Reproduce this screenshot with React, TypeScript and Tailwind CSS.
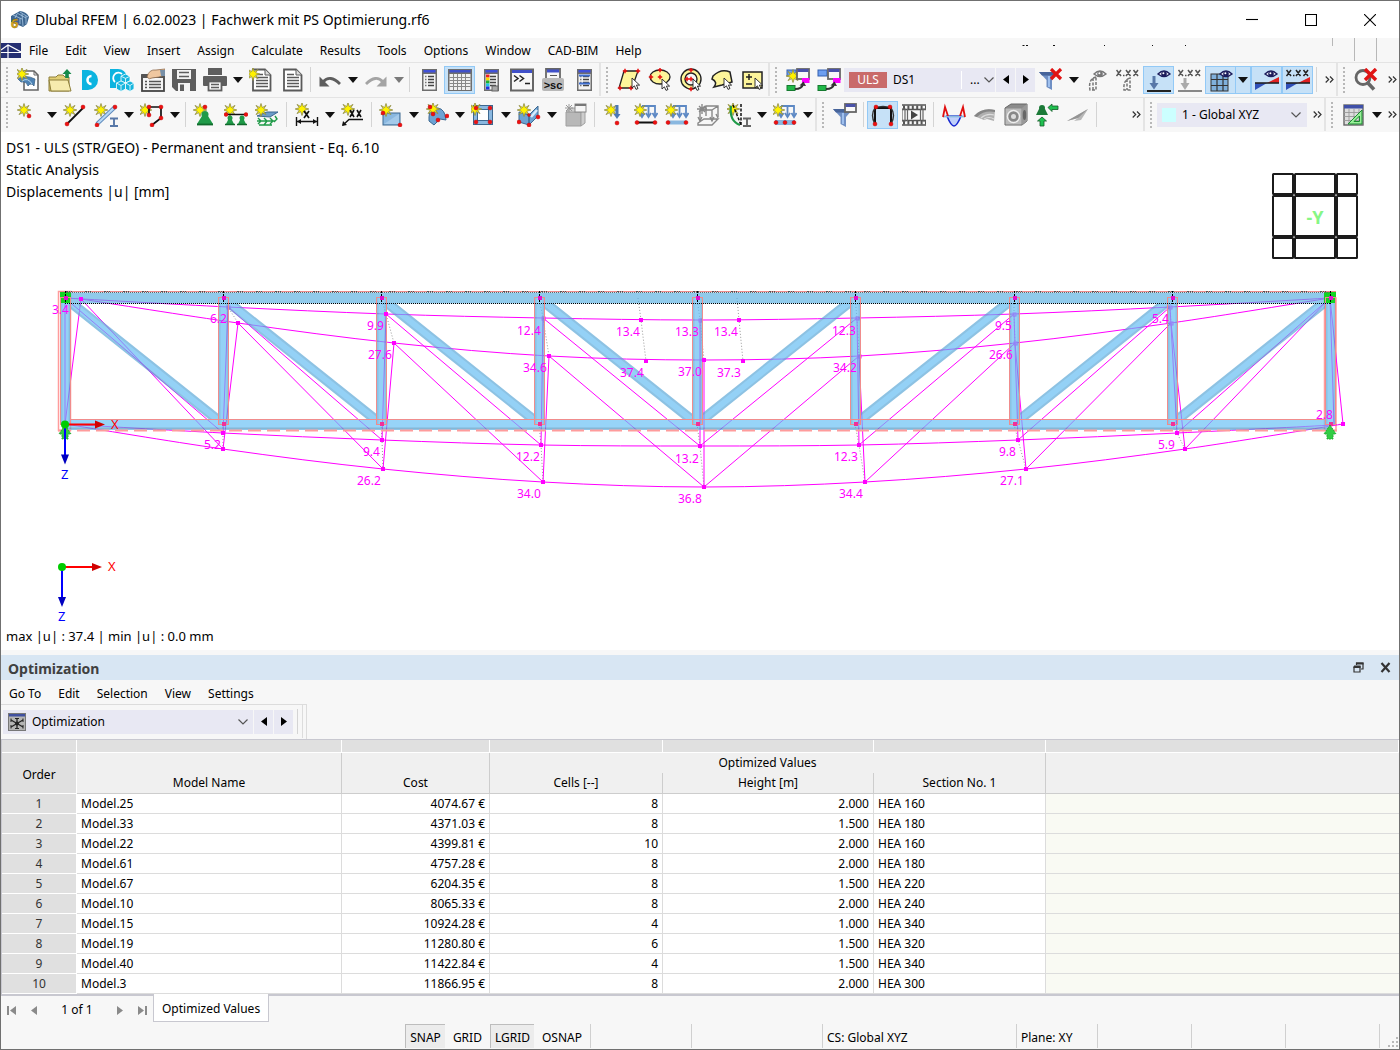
import React from "react";

type Kids = { children?: React.ReactNode };

/* ---------- small drawing helpers ---------- */

const Star = ({ x = 6, y = 6 }: { x?: number; y?: number }) => (
  <g transform={`translate(${x} ${y})`}>
    <path
      d="M0-6.5 1.3-2.4 5-4.6 2.7-1.2 6.8 0 2.7 1.2 5 4.6 1.3 2.6 0 6.5-1.3 2.6-5 4.6-2.7 1.2-6.8 0-2.7-1.2-5-4.6-1.3-2.4Z"
      fill="#fff200"
      stroke="#8d8a4a"
      strokeWidth=".8"
    />
  </g>
);
const Dot = ({ x, y, r = 2 }: { x: number; y: number; r?: number }) => (
  <circle cx={x} cy={y} r={r} fill="#f01010" stroke="#b00000" strokeWidth=".4" />
);
const Cursor = ({ x = 14, y = 11 }: { x?: number; y?: number }) => (
  <path transform={`translate(${x} ${y})`} d="M0 0V10L2.4 7.8 4 11.4 6 10.5 4.4 7.1H7.6Z" fill="#fff" stroke="#222" strokeWidth=".9" />
);
const Cross = ({ x, y }: { x: number; y: number }) => (
  <path d={`M${x - 2.2} ${y}h4.4M${x} ${y - 2.2}v4.4`} stroke="#e81010" strokeWidth="1.5" />
);
const Eye = ({ x = 14, y = 6, c = "#1d1d5c" }: { x?: number; y?: number; c?: string }) => (
  <g transform={`translate(${x} ${y})`}>
    <path d="M-6 0Q0-6 6 0Q0 5-6 0Z" fill="#f4f4fa" stroke={c} strokeWidth="1.4" />
    <circle r="2.8" fill={c} />
    <circle r="1" cx="-.6" cy="-.8" fill="#fff" />
  </g>
);
const WindowBox = ({ x, y, w, h }: { x: number; y: number; w: number; h: number }) => (
  <g>
    <rect x={x} y={y} width={w} height={h} fill="#f8f8f8" stroke="#666" strokeWidth="1.8" />
    <rect x={x + 0.6} y={y} width={w - 1.2} height="3" fill="#4a52a8" />
  </g>
);
const DownArrows = () => (
  <g stroke="#5c88c4" strokeWidth="1.8" fill="none">
    <path d="M8 3H21V13M8 3V13M14.500 3V12" />
    <path d="M5.500 10 8 14 10.500 10M12 10 14.500 14 17 10M18.500 10 21 14 23.500 10" />
  </g>
);
const Values = ({ c }: { c: string }) => (
  <g stroke={c} strokeWidth="1.5" fill="none">
    <path d="M.500 2 5 8M5 2 .500 8M10 2 14.500 8M14.500 2 10 8M17.500 2 22 8M22 2 17.500 8" />
    <path d="M7 7.500h1.500" />
  </g>
);
const Docs = ({ star = false }: { star?: boolean }) => (
  <>
    <path d="M4 1.500H16L21.500 7V22.500H4Z" fill="#fff" stroke="#5a5a5a" strokeWidth="1.800" />
    <path d="M16 1.500V7H21.500" fill="#ddd" stroke="#5a5a5a" />
    <path d="M7 9.500h12M7 12.500h12M7 15.500h12M7 18.500h12M7 6.500h7" stroke="#5a5a5a" strokeWidth="1.500" />
    {star && <Star x={4} y={6} />}
  </>
);
const ListWindow = ({ bars = false, blue = false }: { bars?: boolean; blue?: boolean }) => (
  <>
    <rect x="5" y="1" width="15" height="22" fill="#6e6e6e" />
    <rect x="6.500" y="6" width="12" height="15.500" fill="#f4f4f4" />
    <rect x="6.500" y="2" width="12" height="2.500" fill="#4050d8" />
    <path d="M11 8.500h6M11 11.500h6M11 14.500h6M11 17.500h6" stroke="#444" strokeWidth="1.300" />
    <path d="M8 8.500h1.500M8 11.500h1.500M8 14.500h1.500M8 17.500h1.500" stroke="#777" strokeWidth="1.300" />
    {bars && (
      <g>
        <rect x="7" y="6.500" width="3.500" height="3" fill="#f02020" />
        <rect x="7" y="9.500" width="3.500" height="3" fill="#ffd800" />
        <rect x="7" y="12.500" width="3.500" height="3" fill="#20b030" />
        <rect x="7" y="15.500" width="3.500" height="3" fill="#20c8e8" />
        <rect x="7" y="18.500" width="3.500" height="3" fill="#2030e0" />
        <rect x="13" y="18" width="6" height="5" fill="#aaa" stroke="#666" />
      </g>
    )}
    {blue && <path d="M7 7.500h11M7 15.500h11" stroke="#3f6fd0" strokeWidth="1.800" />}
  </>
);
const Flow = ({ star = false }: { star?: boolean }) => (
  <>
    <rect x="1" y="2" width="9" height="6" fill="#6d9ff0" stroke="#3560b0" />
    {star && <Star x={7} y={8} />}
    <WindowBox x={11} y={1} w={12} h={10} />
    <rect x="16" y="10" width="7.500" height="5" fill="#f0f" />
    <rect x="1" y="17.500" width="8" height="5" fill="#20b848" stroke="#167a30" />
    <path d="M9 21Q16 21 17 16" fill="none" stroke="#333" strokeWidth="2" />
    <path d="M13.500 17.500 17.500 13.500 20 18Z" fill="#333" />
  </>
);
const Funnel = ({ y = 5 }: { y?: number }) => (
  <g transform={`translate(0 ${y})`}>
    <path d="M0 0H20L13 8V18L7.500 15V8Z" fill="#6f8fc4" />
    <path d="M0 0H20L17 3.500H3Z" fill="#47649a" />
    <path d="M10 4V15" stroke="#9fc0ee" strokeWidth="2" />
  </g>
);

/* ---------- toolbar drawings ---------- */

const art: Record<string, React.ReactNode> = {
  "New model": (
    <>
      <path d="M7 3H17L21 7V22H7Z" fill="#fff" stroke="#666" strokeWidth="1.600" />
      <path d="M17 3V7H21" fill="none" stroke="#666" />
      <path d="M1 11Q8 6 18 11L17 18Q14 14 11 18Q9 13 4 14Z" fill="#4d82b4" stroke="#335b80" strokeWidth=".7" />
      <path d="M5 13Q11 9 15 16" fill="none" stroke="#b4d6f0" />
      <Star x={5} y={6} />
    </>
  ),
  Open: (
    <>
      <path d="M1 23V9H8L10 7H15L17 9H21V23Z" fill="#e2cf76" stroke="#8d7e3a" />
      <path d="M1 12H20L23 23H3Z" fill="#f6ebae" stroke="#8d7e3a" />
      <path d="M19 1 23.500 6H20.800V10H17.200V6H14.500Z" fill="#168a4a" />
    </>
  ),
  "Dlubal Center": (
    <>
      <path d="M3 2H9A10 10 0 0 1 9 22H3Z" fill="#0cb4e0" />
      <path d="M12.500 8A4 4 0 1 0 12.500 16" fill="none" stroke="#fff" strokeWidth="2.600" />
    </>
  ),
  "Block manager": (
    <>
      <path d="M0 1H8A10 10 0 0 1 17 8L9 20H0Z" fill="#0cb4e0" />
      <path d="M5 14A5 5 0 0 1 12 6" fill="none" stroke="#fff" strokeWidth="1.800" />
      <g fill="#16b6de" stroke="#fff" strokeWidth=".8">
        <path d="M15.500 6 20 8.200V13L15.500 15 11 13V8.200Z" />
        <path d="M11 13 15.500 15V21L11 23.500 6.500 21V15Z" />
        <path d="M20 13 24 15V21L20 23.500 15.500 21V15Z" />
        <path d="M11 8.200 15.500 10.400 20 8.200M15.500 10.400V15M6.500 15 11 17.500 15.500 15 20 17.500 24 15M11 17.500V23.500M20 17.500V23.500" />
      </g>
    </>
  ),
  "Project navigator": (
    <>
      <rect x="1" y="7" width="22" height="16" fill="#f5f5f5" stroke="#444" strokeWidth="1.800" />
      <rect x="1" y="7" width="22" height="3" fill="#555" />
      <path d="M4 13.500h2M4 16.500h2M4 19.500h2M8 13.500h12M8 16.500h12M8 19.500h12" stroke="#555" strokeWidth="1.300" />
      <path d="M6 9Q8 1 15 2L24 1V7L18 9 11 10Q8 12 6 9Z" fill="#efc7a0" stroke="#8e6b4d" strokeWidth=".8" />
      <path d="M19 2H24V8H20Z" fill="#7890a8" />
    </>
  ),
  Save: (
    <>
      <path d="M0 1H24V23H4L0 19Z" fill="#5e5e5e" />
      <rect x="5" y="2" width="14" height="9" fill="#f4f4f4" />
      <path d="M7 4.500h10M7 8.500h10" stroke="#5e5e5e" strokeWidth="1.400" />
      <rect x="6" y="15" width="12" height="8" fill="#f4f4f4" />
      <rect x="8" y="16.500" width="4" height="6.500" fill="#5e5e5e" />
    </>
  ),
  Print: (
    <>
      <rect x="5" y="0" width="14" height="7" fill="#5e5e5e" />
      <rect x="0" y="8" width="24" height="10" rx="1" fill="#5e5e5e" />
      <rect x="5.500" y="13.500" width="13" height="9" fill="#f7f7f7" stroke="#5e5e5e" strokeWidth="1.800" />
      <path d="M8 16.500h8M8 19.500h8" stroke="#5e5e5e" strokeWidth="1.600" />
    </>
  ),
  "New report": <Docs star />,
  Report: <Docs />,
  Undo: (
    <>
      <path d="M5 14Q12 6 22 16" fill="none" stroke="#5e5e5e" strokeWidth="2.800" />
      <path d="M1.500 8.500V18.500H11.500Z" fill="#5e5e5e" />
    </>
  ),
  Redo: (
    <>
      <path d="M19 14Q12 6 2 16" fill="none" stroke="#a4a4a4" strokeWidth="2.800" />
      <path d="M22.500 8.500V18.500H12.500Z" fill="#a4a4a4" />
    </>
  ),
  Navigator: <ListWindow />,
  Tables: (
    <>
      <rect x="0" y="1" width="24" height="22" fill="#6e6e6e" />
      <rect x="1.500" y="2" width="21" height="2.500" fill="#4050c8" />
      <rect x="1.500" y="6" width="21" height="16" fill="#f0f0f0" />
      <path d="M1.500 9.500h21M1.500 12.500h21M1.500 15.500h21M1.500 18.500h21M5.500 6v16M9.500 6v16M13.500 6v16M17.500 6v16" stroke="#888" />
    </>
  ),
  "Control panel": <ListWindow bars />,
  Console: (
    <>
      <rect x="1" y="1.500" width="22" height="21" fill="#f6f6f6" stroke="#666" strokeWidth="2" />
      <rect x="2" y="2" width="20" height="3" fill="#4050c8" />
      <path d="M4 7.500 8 10.500 4 13.500M9.500 7.500 13.500 10.500 9.500 13.500M15 15.500H20" fill="none" stroke="#222" strokeWidth="1.500" />
    </>
  ),
  Script: (
    <>
      <path d="M5 1H19V12H5Z" fill="#f6f6f6" stroke="#666" strokeWidth="1.800" />
      <rect x="6" y="1.500" width="12" height="3" fill="#4050c8" />
      <path d="M9 7.500h7" stroke="#555" />
      <rect x="1" y="10" width="22" height="13" rx="2" fill="#b8b8b8" />
      <text x="12" y="21" textAnchor="middle" fontSize="11" fontWeight="700" fill="#111" fontFamily="Liberation Sans, sans-serif">&gt;sc</text>
    </>
  ),
  "Property list": <ListWindow blue />,
  "Select parallelogram": (
    <>
      <path d="M7 3H21L15 20H2Z" fill="#fdf59a" stroke="#222" strokeWidth="1.300" />
      <Cross x={8} y={3} /><Cross x={21} y={3} /><Cross x={3} y={20} /><Cross x={14} y={20} />
      <Cursor x={15} y={10} />
    </>
  ),
  "Select ellipse": (
    <>
      <ellipse cx="12" cy="9" rx="10" ry="7" fill="#fdf59a" stroke="#222" strokeWidth="1.300" />
      <Cross x={12} y={2} /><Cross x={3} y={9} /><Cross x={12} y={9} />
      <Cursor x={14} y={11} />
    </>
  ),
  "Select ring": (
    <>
      <circle cx="12" cy="11" r="10" fill="#fdf59a" stroke="#222" strokeWidth="1.400" />
      <circle cx="12" cy="11" r="6" fill="#f7f7f7" stroke="#222" strokeWidth="1.400" />
      <Cross x={12} y={2} /><Cross x={12} y={11} /><Cross x={8} y={11} /><Cross x={12} y={21} />
      <Cursor x={14} y={11} />
    </>
  ),
  "Select polygon": (
    <>
      <path d="M3 8Q11 0 20 4L22 14 12 17 4 19Q8 14 2 11Z" fill="#fdf59a" stroke="#222" strokeWidth="1.500" />
      <Cursor x={14} y={10} />
    </>
  ),
  "Select by number": (
    <>
      <rect x="2" y="4" width="19" height="16" fill="#fdf59a" stroke="#222" strokeWidth="1.500" />
      <path d="M5 9h6M8 6v6M5 16h6" stroke="#222" strokeWidth="1.500" />
      <Cursor x={14} y={10} />
    </>
  ),
  "New load case": <Flow star />,
  "Load cases": <Flow />,
  "Cancel filter": (
    <>
      <Funnel y={4} />
      <path d="M12 1 22 11M22 1 12 11" stroke="#e01414" strokeWidth="3.200" />
    </>
  ),
  "Show loads": (
    <>
      <path d="M11 9Q3 11 5 22H11ZM8 10V22" fill="none" stroke="#777" strokeWidth="1.500" strokeDasharray="3 1.500" />
      <Eye x={15} y={6} c="#777" />
    </>
  ),
  "Load values": (
    <>
      <Values c="#555" />
      <path d="M14 10Q7 12 8 22H14ZM11 11V22" fill="none" stroke="#777" strokeWidth="1.500" strokeDasharray="3 1.500" />
    </>
  ),
  "Show results": (
    <>
      <path d="M7 8V17" stroke="#5878a8" strokeWidth="3" />
      <path d="M2.500 15H11.500L7 21.500Z" fill="#5878a8" />
      <path d="M0 23h24" stroke="#222" strokeWidth="2" />
      <Eye x={17} y={6} />
    </>
  ),
  "Result values": (
    <>
      <Values c="#555" />
      <path d="M7 10V17" stroke="#aaa" strokeWidth="3" />
      <path d="M2.500 15H11.500L7 22Z" fill="#aaa" />
      <path d="M0 23h24" stroke="#888" strokeWidth="2" />
    </>
  ),
  "Result grid": (
    <>
      <rect x="2" y="6" width="17" height="17" fill="#7fb0dc" stroke="#333" />
      <path d="M2 11.500h17M2 17.500h17M8 6v17M14 6v17" stroke="#333" strokeWidth="1.200" />
      <Eye x={17} y={6} />
    </>
  ),
  "Result diagrams": (
    <>
      <path d="M0 15H12L0 22Z" fill="#2f4fb8" />
      <path d="M12 15 24 9V15Z" fill="#e02020" />
      <path d="M0 15h24" stroke="#222" strokeWidth="1.600" />
      <Eye x={16} y={6} />
    </>
  ),
  "Diagram values": (
    <>
      <Values c="#222" />
      <path d="M0 15H12L0 22Z" fill="#2f4fb8" />
      <path d="M12 15 24 9V15Z" fill="#e02020" />
      <path d="M0 15h24" stroke="#222" strokeWidth="1.600" />
    </>
  ),
  "Clear search": (
    <>
      <circle cx="9" cy="9.500" r="7" fill="none" stroke="#666" strokeWidth="2.800" />
      <path d="M13 14 20 21.500" stroke="#666" strokeWidth="3.600" />
      <path d="M11 1 22 12M22 1 11 12" stroke="#e01414" strokeWidth="3.400" />
    </>
  ),
  "New node": (<><Star x={7} y={7} /><Dot x={12} y={13} /></>),
  "New line": (
    <>
      <Star x={7} y={7} /><path d="M4 21 20 5" stroke="#111" strokeWidth="1.800" />
      <Dot x={4} y={21} /><Dot x={20} y={4} />
    </>
  ),
  "New member": (
    <>
      <Star x={7} y={7} /><path d="M3 21 21 4" stroke="#5c88bc" strokeWidth="4" /><path d="M3 21 21 4" stroke="#b8d8f4" strokeWidth="2.200" />
      <Dot x={3} y={22} /><Dot x={21} y={4} />
      <path d="M16 15.500h8M16 23h8M20 15.500V23" stroke="#5878a8" strokeWidth="1.900" />
    </>
  ),
  "New polyline": (
    <>
      <Star x={5} y={7} /><path d="M9 13V4H21V15L12 22" fill="none" stroke="#111" strokeWidth="1.700" />
      <Dot x={9} y={12} /><Dot x={9} y={4} /><Dot x={21} y={4} /><Dot x={21} y={15} /><Dot x={12} y={22} />
    </>
  ),
  "New nodal support": (
    <>
      <Star x={7} y={7} /><Dot x={12} y={4} />
      <circle cx="12" cy="11.500" r="3.500" fill="#1f9a48" /><path d="M9 13H15L20 21H4Z" fill="#1f9a48" /><path d="M4 21.500h16" stroke="#116a2c" strokeWidth="1.800" />
    </>
  ),
  "New line support": (
    <>
      <Star x={6} y={7} /><path d="M2 11.500H22" stroke="#111" strokeWidth="1.500" /><Dot x={2} y={11.5} /><Dot x={22} y={11.5} />
      <path d="M6 13 10 21H2ZM18 13 22 21H14Z" fill="#1f9a48" /><circle cx="6" cy="15" r="2.500" fill="#1f9a48" /><circle cx="18" cy="15" r="2.500" fill="#1f9a48" /><path d="M1 21.500h10M13 21.500h10" stroke="#116a2c" strokeWidth="1.500" />
    </>
  ),
  "New surface support": (
    <>
      <path d="M2 13 12 9H23L15 14Z" fill="#6b9cc8" stroke="#3d6890" />
      <Star x={6} y={7} />
      <path d="M3 15 6 18 3 21M9 15 12 18 9 22M15 15 18 18 15 21M20 13 22 16 19 19M2 18H20M4 22H17" fill="none" stroke="#1f9a48" strokeWidth="1.400" />
    </>
  ),
  "New dimension": (
    <>
      <Star x={7} y={6} /><path d="M1.500 14V23M22.500 14V23M2 18.500H22" stroke="#111" strokeWidth="1.400" /><path d="M2 18.500 6 16V21ZM22 18.500 18 16V21Z" fill="#111" />
      <path d="M9 8 14 15M14 8 9 15" stroke="#111" strokeWidth="1.700" />
    </>
  ),
  "New annotation": (
    <>
      <Star x={7} y={6} /><path d="M9 7 13 14M13 7 9 14M16 7 20 14M20 7 16 14" stroke="#111" strokeWidth="1.600" /><path d="M22 16.500H8L2 22" fill="none" stroke="#111" strokeWidth="1.400" /><path d="M1 23 2 18 6 22Z" fill="#111" />
    </>
  ),
  "New surface": (
    <>
      <rect x="4" y="10" width="17" height="12" fill="#8ab8e0" stroke="#3d6890" /><path d="M5 21 20 11V21Z" fill="#a4caea" /><Star x={7} y={7} /><Dot x={4} y={10} /><Dot x={21} y={22} />
    </>
  ),
  "New curved surface": (
    <>
      <path d="M4 14Q4 4 13 5Q20 6 21 17L15 16 9 22 4 18Z" fill="#6da3d4" stroke="#3d6890" /><Star x={8} y={6} /><Dot x={5} y={4} /><Dot x={8} y={11} /><Dot x={13} y={17} /><Dot x={22} y={13} />
    </>
  ),
  "New opening": (
    <>
      <rect x="2.500" y="2.500" width="19" height="19" fill="#8ab8e0" stroke="#3d6890" /><rect x="6.500" y="6.500" width="11" height="11" fill="#fff" stroke="#3d6890" /><Star x={4} y={6} /><Dot x={5} y={5} /><Dot x={19} y={5} /><Dot x={5} y={19} /><Dot x={19} y={19} />
    </>
  ),
  "New solid": (
    <>
      <path d="M2 9 12 12V22L2 19ZM12 12 21 3V13L12 22Z" fill="#6da3d4" stroke="#3d6890" /><path d="M14 14 20 7" stroke="#d8ecfc" strokeWidth="2.500" /><Star x={7} y={7} /><Dot x={2} y={19} /><Dot x={12} y={22} /><Dot x={21} y={14} /><Dot x={12} y={12} r={1.5} />
    </>
  ),
  "New set": (
    <>
      <path d="M3 9H18V23H3Z" fill="#b8b8b8" stroke="#a0a0a0" /><path d="M3 9 8 5H23L18 9ZM18 9 22 6V20L18 23Z" fill="#cdcdcd" stroke="#a0a0a0" /><rect x="12" y="1" width="11" height="8" fill="#f6f6f6" stroke="#888" /><path d="M12 2h11" stroke="#777" strokeWidth="2" /><path d="M6 1V9M2 5H10M3 2 9 8M9 2 3 8" stroke="#999" />
    </>
  ),
  "Nodal load": (
    <>
      <Star x={8} y={7} /><path d="M14 2V12" stroke="#4c78b4" strokeWidth="3" /><path d="M10.500 11H17.500L14 16Z" fill="#4c78b4" /><Dot x={14} y={20} />
    </>
  ),
  "Line load": (<><DownArrows /><Star x={6} y={7} /><path d="M3 19.500H21" stroke="#111" strokeWidth="2" /><Dot x={3} y={19.5} /><Dot x={21} y={19.5} /></>),
  "Member load": (<><DownArrows /><Star x={6} y={7} /><path d="M3 19.500H21" stroke="#8ab8e0" strokeWidth="4" /><Dot x={3} y={19.5} /><Dot x={21} y={19.5} /></>),
  "Surface load": (
    <g fill="none" stroke="#888" strokeWidth="1.400">
      <path d="M2 20 8 16H22L16 22H2ZM4 18V7L10 3H22V14M4 7H16V18M16 7 22 3M10 3V13" /><path d="M2 14 4 18 6 14M14 14 16 18 18 14M20 11 22 15" /><path d="M6 1V11M1 6H11M3 3 9 9M9 3 3 9" />
    </g>
  ),
  Imperfection: (
    <>
      <Star x={6} y={6} /><path d="M4 3Q2 18 13 22" fill="none" stroke="#1f9a48" strokeWidth="2.200" /><path d="M14 1V23M6 2 14 22" stroke="#111" strokeWidth="1.500" strokeDasharray="3 1.500" /><path d="M16 15.500h8M16 23h8M20 15.500V23" stroke="#666" strokeWidth="1.900" />
    </>
  ),
  "Free load": (<><DownArrows /><Star x={5} y={7} /><rect x="2" y="17" width="20" height="5" fill="#8ab8e0" /><Dot x={3} y={19.5} /><Dot x={12} y={19.5} /><Dot x={21} y={19.5} /></>),
  "Filter window": (<><Funnel y={6} /><WindowBox x={12} y={1} w={11} h={8} /></>),
  Deformation: (
    <>
      <path d="M4 21V5H20V21" fill="none" stroke="#111" strokeWidth="2" /><path d="M4 21Q-1 12 4 5Q12 2 20 5Q25 12 20 21" fill="none" stroke="#333" strokeWidth="1.400" /><Dot x={5} y={4} /><Dot x={19} y={4} /><Dot x={4} y={21} /><Dot x={20} y={21} />
    </>
  ),
  Animation: (
    <>
      <path d="M0 2H24M0 6.500H24M0 17.500H24M0 22H24" stroke="#555" strokeWidth="1.400" /><path d="M1 4.200H24M1 19.800H24" stroke="#555" strokeWidth="3.400" strokeDasharray="2 2.400" /><path d="M5.500 6V18M18.500 6V18M0 6V18H3V6ZM24 6H21V18H24" fill="none" stroke="#666" strokeWidth="1.200" /><path d="M9 7.500V16.500L16 12Z" fill="#444" />
    </>
  ),
  "Internal forces": (
    <>
      <path d="M5 13Q9 23 12 23T19 13Z" fill="#c0d0fa" stroke="#1828d0" strokeWidth="1.600" /><path d="M1 13.500H23" stroke="#8ab8e0" strokeWidth="1.800" /><path d="M1 14 3 4 6 13M23 14 21 4 18 13" fill="none" stroke="#e01010" strokeWidth="1.800" />
    </>
  ),
  "Surface stress": (
    <>
      <path d="M1 13Q9 4 22 7L21 18 14 16 11 17Z" fill="#b0b0b0" /><path d="M1 13Q9 4 22 7V9Q11 7 4 14Z" fill="#858585" /><path d="M8 15Q14 10 21 12M11 16Q16 13 21 16" fill="none" stroke="#ddd" strokeWidth="1.200" />
    </>
  ),
  "Solid stress": (
    <>
      <path d="M1 5 7 1H23V18L18 22H1Z" fill="#8b8b8b" stroke="#666" /><rect x="1.500" y="5.500" width="16" height="16" fill="#bababa" /><ellipse cx="9.500" cy="13.500" rx="6" ry="6" fill="#888" stroke="#eee" strokeWidth="1.500" /><circle cx="9.500" cy="13.500" r="2.500" fill="#ddd" /><path d="M18 5 23 1V18L18 22Z" fill="#999" /><ellipse cx="20.500" cy="12" rx="1.700" ry="5" fill="#666" />
    </>
  ),
  Reactions: (
    <>
      <circle cx="7" cy="5" r="3" fill="#1c7a38" /><path d="M4 6H10L13 12H1Z" fill="#1c7a38" /><path d="M13 4.500 17 1V3H23V6.500H17V8.500Z" fill="#20c050" stroke="#145a28" strokeWidth=".8" /><path d="M7 14 11.500 18H9V23H5V18H2.500Z" fill="#20c050" stroke="#145a28" strokeWidth=".8" />
    </>
  ),
  "Result section": (<><path d="M1 18 22 6 15 17 8 18 12 15Z" fill="#b8b8b8" /><path d="M1 18 22 6 12 15Z" fill="#949494" /></>),
  "View table": (
    <>
      <rect x="2" y="2" width="19" height="20" fill="#ddd" stroke="#666" strokeWidth="1.400" /><rect x="2" y="2" width="19" height="3.500" fill="#3f50a8" /><path d="M2 9.500h19M2 13.500h19M2 17.500h19M7 6v16M12 6v16M17 6v16" stroke="#999" strokeWidth=".9" /><path d="M6 21H20V7ZM12 18.500H17.500V13Z" fill="#98f098" stroke="#1b8a30" fillRule="evenodd" />
    </>
  ),
};

/* ---------- toolbar pieces ---------- */

const Triangle = ({ light = false }: { light?: boolean }) => (
  <svg className="h-[6px] w-[10px]" viewBox="0 0 10 6" aria-hidden="true">
    <path d="M0 0H10L5 6Z" fill={light ? "#7a7a7a" : "#111"} />
  </svg>
);
const Tool = ({ n, on = false }: { n: string; on?: boolean }) => (
  <button
    type="button"
    title={n}
    aria-label={n}
    className={`flex h-7 w-[31px] shrink-0 items-center justify-center ${on ? "border border-[#92c9f6] bg-[#c6e1f7]" : ""}`}
  >
    <svg className="size-6 shrink-0" viewBox="0 0 24 24" aria-hidden="true">{art[n]}</svg>
  </button>
);
const Drop = ({ label, light = false, on = false }: { label: string; light?: boolean; on?: boolean }) => (
  <button
    type="button"
    aria-label={`${label} options`}
    className={`flex h-7 w-[15px] shrink-0 items-center justify-center ${on ? "border border-l-0 border-[#92c9f6] bg-[#c6e1f7]" : ""}`}
  >
    <Triangle light={light} />
  </button>
);
const Sep = ({ wide = false }: { wide?: boolean }) => (
  <span className={`h-[25px] w-px shrink-0 bg-[#d4d4d4] ${wide ? "mx-1" : "mx-[3px]"}`} />
);
const Grip = () => <span className="mx-[5px] h-[26px] w-0 shrink-0 border-l-2 border-dotted border-[#b8b8b8]" />;
const Group = ({ children, grow = false, last = false }: Kids & { grow?: boolean; last?: boolean }) => (
  <div className={`flex h-full items-center ${grow ? "flex-1" : "shrink-0"} ${last ? "" : "border-r-2 border-[#e4e4e4]"}`}>
    <Grip />
    {children}
  </div>
);
const More = ({ label }: { label: string }) => (
  <button type="button" aria-label={`More ${label}`} className="flex h-6 w-[14px] shrink-0 items-center justify-center">
    <svg className="h-[7px] w-[9px]" viewBox="0 0 9 7" aria-hidden="true">
      <path d="M.7.500 3.700 3.500.7 6.500M5 .500 8 3.500 5 6.500" fill="none" stroke="#333" strokeWidth="1.200" />
    </svg>
  </button>
);
const Chevron = () => (
  <svg className="pointer-events-none h-[6px] w-[10px] shrink-0" viewBox="0 0 10 6" aria-hidden="true">
    <path d="M.500.500 5 5 9.500.500" fill="none" stroke="#555" strokeWidth="1.200" />
  </svg>
);
const Step = ({ dir, label }: { dir: "l" | "r"; label: string }) => (
  <button type="button" aria-label={label} className="ml-px flex h-6 w-[19px] shrink-0 items-center justify-center bg-[#e8e8f3]">
    <svg className="h-[9px] w-[6px]" viewBox="0 0 6 9" aria-hidden="true">
      <path d={dir === "l" ? "M6 0V9L0 4.500Z" : "M0 0V9L6 4.500Z"} fill="#000" />
    </svg>
  </button>
);

/* ---------- structure view ---------- */

const xs = [65, 223, 381, 539, 697, 855, 1014, 1172, 1330];
type P = [number, number];
const topA: P[] = [[65, 298], [228, 307], [386, 314], [543, 318], [700, 320], [857, 318], [1014, 314], [1170, 307], [1330, 298]];
const botA: P[] = [[65, 424], [223, 433], [382, 440], [541, 445], [700, 446], [859, 445], [1018, 440], [1177, 433], [1334, 425]];
const topB: P[] = [[81, 299], [238, 323], [394, 343], [549, 356], [704, 360], [859, 356], [1015, 343], [1171, 323], [1330, 298]];
const botB: P[] = [[65, 424], [223, 449], [383, 469], [543, 482], [704, 487], [865, 482], [1026, 469], [1185, 449], [1343, 424]];
const smooth = (p: P[]) =>
  p.slice(1).reduce((d, q, i) => {
    const a = p[Math.max(i - 1, 0)], b = p[i], c = p[Math.min(i + 2, p.length - 1)];
    return `${d}C${b[0] + (q[0] - a[0]) / 6} ${b[1] + (q[1] - a[1]) / 6} ${q[0] - (c[0] - b[0]) / 6} ${q[1] - (c[1] - b[1]) / 6} ${q[0]} ${q[1]}`;
  }, `M${p[0][0]} ${p[0][1]}`);
const webs = (t: P[], b: P[]) =>
  t.map((p, i) => `M${p}L${b[i]}${i < 4 ? `M${p}L${b[i + 1]}` : ""}${i > 4 ? `M${p}L${b[i - 1]}` : ""}`).join("");
const diagonals = xs.map((x, i) => (i < 4 ? `M${x} 298L${xs[i + 1]} 424` : i > 4 ? `M${x} 298L${xs[i - 1]} 424` : "")).join("");
const marks: P[] = [...botA.slice(1, 8), ...topB.slice(0, 5), ...botB.slice(1), [386, 314], [641, 320], [739, 320], [646, 361], [743, 361]];
const faintMarks: P[] = [topA[1], topA[3], topA[4], topA[5], topA[6], topA[7], topB[5], topB[6], topB[7]];
const labels: [string, number, number][] = [
  ["3.4", 52, 314], ["6.2", 210, 323], ["9.9", 367, 330], ["27.6", 368, 359], ["12.4", 517, 335], ["34.6", 523, 372],
  ["13.4", 616, 336], ["37.4", 620, 377], ["13.3", 675, 336], ["37.0", 678, 376], ["13.4", 714, 336], ["37.3", 717, 377],
  ["12.3", 832, 335], ["34.2", 833, 372], ["9.5", 995, 330], ["26.6", 989, 359], ["5.4", 1152, 323], ["2.8", 1316, 419],
  ["5.2", 204, 449], ["9.4", 363, 456], ["26.2", 357, 485], ["12.2", 516, 461], ["34.0", 517, 498], ["13.2", 675, 463],
  ["36.8", 678, 503], ["12.3", 834, 461], ["34.4", 839, 498], ["9.8", 999, 456], ["27.1", 1000, 485], ["5.9", 1158, 449],
];
const Axes = ({ x, y }: { x: number; y: number }) => (
  <g transform={`translate(${x} ${y})`} fontSize="13">
    <path d="M0 0H32" stroke="#f00" strokeWidth="2" /><path d="M30-4 40 0 30 4Z" fill="#d00000" />
    <path d="M0 0V32" stroke="#00f" strokeWidth="2" /><path d="M-4 30 0 40 4 30Z" fill="#0000c0" />
    <circle r="4" fill="#0c0" />
    <text x="46" y="4" fill="#f00">X</text><text x="-4" y="54" fill="#00f">Z</text>
  </g>
);
const Support = ({ x }: { x: number }) => (
  <path d={`M${x} 425L${x + 6} 434H${x + 3}V439H${x - 3}V434H${x - 6}Z`} fill="#3c4" stroke="#2a3" strokeDasharray="2 1" />
);
const Structure = () => (
  <svg className="col-start-1 row-start-1 block w-full" viewBox="1 132 1398 518" role="img" aria-label="Truss displacements" fontFamily="Noto Sans, sans-serif">
    <path d="M58.500 291.500V430.500H70.500V291.500ZM1324.500 298V430.500H1336V298Z" fill="#fff" stroke="#ff9c9c" strokeWidth="1.500" />
    <g fill="none" stroke="#999" strokeDasharray="1 2">
      {xs.map((x, i) => (
        <path key={x} d={`M${x} 298L${topA[i]}L${topB[i]}M${x} 424L${botA[i]}L${botB[i]}`} />
      ))}
      <path d="M638 298 641 320 646 361M737 298 739 320 743 361" />
    </g>
    <g fill="none" stroke="#f0f" strokeWidth="1">
      <path d={smooth(topA)} /><path d={smooth(botA)} /><path d={smooth(topB)} /><path d={smooth(botB)} />
      <path d={webs(topA, botA)} /><path d={webs(topB, botB)} />
      {faintMarks.map(([x, y]) => <rect key={`${x}-${y}`} x={x - 1} y={y - 1} width="3" height="3" />)}
    </g>
    <g opacity=".68">
      <path d={diagonals} stroke="#58a6d6" strokeWidth="10" />
      <path d={diagonals} stroke="#63bcf2" strokeWidth="6" />
      <path d="M70 298H1324" stroke="#5cb2e2" strokeWidth="11" />
      <path d="M65 424.500H1330" stroke="#67c1f6" strokeWidth="11" />
      <path d="M65 428.500H1330" stroke="#4c96c2" strokeWidth="2" />
      {xs.map((x) => (
        <g key={x}>
          <path d={`M${x}.500 297V425`} stroke="#54a6d6" strokeWidth="9" />
          <path d={`M${x}.500 297V425`} stroke="#63bcf2" strokeWidth="6" />
        </g>
      ))}
    </g>
    <path d="M60 292H71V303H60ZM1324 292H1336V303H1324Z" fill="#12d422" />
    <g fill="none" stroke="#f08c8c">
      {xs.map((x) => <rect key={x} x={x - 4.5} y="297.500" width="10" height="127" />)}
      <path d="M70 419.500H1324M60 291.500H1336" />
      <path d="M58 430.500H1337" stroke="#ff9c9c" strokeWidth="2" strokeDasharray="13 6" />
    </g>
    <path d="M66 291.500H1330" stroke="#555" strokeDasharray="2 1 1 1 1 13" />
    <path d="M66 292.500H1330" stroke="#666" strokeDasharray="1 1" />
    <path d="M65 303.500H1330" stroke="#000" strokeDasharray="1 1" />
    <path d={xs.map((x) => `M${x}.500 291V304`).join("")} stroke="#000" strokeDasharray="2 1" />
    <g fill="#f0f">
      {xs.map((x) => (
        <g key={x}>
          <rect x={x - 1} y="296" width="4" height="4" fill="#e010d0" />
          <rect x={x - 1} y="422" width="4" height="4" fill="#f0309a" />
        </g>
      ))}
      {marks.map(([x, y]) => <rect key={`${x}-${y}`} x={x - 2} y={y - 2} width="4" height="4" />)}
    </g>
    <Support x={65} /><Support x={1330} />
    <g fill="#f0f" fontSize="12">
      {labels.map(([t, x, y]) => <text key={`${x}-${y}`} x={x} y={y}>{t}</text>)}
    </g>
    <Axes x={65} y={424.5} />
    <Axes x={62} y={567} />
    <g fill="#fff" stroke="#1b1b1b" strokeWidth="2">
      {[[1273, 20], [1295, 40], [1337, 20]].map(([x, w]) =>
        [[174, 20], [196, 40], [238, 20]].map(([y, h]) => <rect key={`${x}${y}`} x={x} y={y} width={w} height={h} rx=".5" />),
      )}
    </g>
    <text x="1315" y="224" textAnchor="middle" fontSize="18" fontWeight="700" fill="#86f686">-Y</text>
  </svg>
);

/* ---------- optimization table ---------- */

const rows: [string, string, string, string, string][] = [
  ["Model.25", "4074.67 €", "8", "2.000", "HEA 160"],
  ["Model.33", "4371.03 €", "8", "1.500", "HEA 180"],
  ["Model.22", "4399.81 €", "10", "2.000", "HEA 160"],
  ["Model.61", "4757.28 €", "8", "2.000", "HEA 180"],
  ["Model.67", "6204.35 €", "8", "1.500", "HEA 220"],
  ["Model.10", "8065.33 €", "8", "2.000", "HEA 240"],
  ["Model.15", "10924.28 €", "4", "1.000", "HEA 340"],
  ["Model.19", "11280.80 €", "6", "1.500", "HEA 320"],
  ["Model.40", "11422.84 €", "4", "1.500", "HEA 340"],
  ["Model.3", "11866.95 €", "8", "2.000", "HEA 300"],
];
const td = "h-5 border-r border-b border-[#dcdcdc] p-0 px-1 leading-[19px]";
const th = "border-r border-b border-[#cdcdcd] p-0 font-normal align-bottom leading-5";

const ResultTable = () => (
  <table className="w-full table-fixed border-separate border-spacing-0 border-t border-l border-[#c8c8d0]">
    <colgroup>
      <col className="w-[75px]" /><col className="w-[265px]" /><col className="w-[148px]" /><col className="w-[173px]" />
      <col className="w-[211px]" /><col className="w-[172px]" /><col />
    </colgroup>
    <thead className="bg-[#f0f0f0]">
      <tr aria-hidden="true">
        {[0, 1, 2, 3, 4, 5, 6].map((i) => <td key={i} className="h-[13px] border-r border-b border-white bg-[#e0e0e0] p-0" />)}
      </tr>
      <tr>
        <th scope="col" rowSpan={2} className="border-r border-b border-white bg-[#e0e0e0] p-0 pt-1 font-normal">Order</th>
        <th scope="col" rowSpan={2} className={th}>Model Name</th>
        <th scope="col" rowSpan={2} className={th}>Cost</th>
        <th scope="colgroup" colSpan={3} className="h-5 border-r border-[#cdcdcd] p-0 leading-5 font-normal">Optimized Values</th>
        <td rowSpan={2} className="border-b border-[#cdcdcd]" />
      </tr>
      <tr>
        <th scope="col" className={th}>Cells [--]</th>
        <th scope="col" className={th}>Height [m]</th>
        <th scope="col" className={th}>Section No. 1</th>
      </tr>
    </thead>
    <tbody className="bg-white">
      {rows.map(([name, cost, cells, height, section], i) => (
        <tr key={name}>
          <th scope="row" className="h-5 border-r border-b border-white bg-[#e0e0e0] p-0 leading-[19px] font-normal text-[#333]">{i + 1}</th>
          <td className={td}>{name}</td>
          <td className={`${td} text-right`}>{cost}</td>
          <td className={`${td} text-right`}>{cells}</td>
          <td className={`${td} text-right`}>{height}</td>
          <td className={td}>{section}</td>
          <td className="h-5 border-b border-[#dcdcdc] bg-[#f9faf3] p-0" />
        </tr>
      ))}
    </tbody>
  </table>
);

const menus = ["File", "Edit", "View", "Insert", "Assign", "Calculate", "Results", "Tools", "Options", "Window", "CAD-BIM", "Help"];
const panelMenus = ["Go To", "Edit", "Selection", "View", "Settings"];

const PageStep = ({ d, label }: { d: string; label: string }) => (
  <button type="button" aria-label={label} className="flex h-6 w-[22px] items-center justify-center">
    <svg className="h-[9px] w-[10px]" viewBox="0 0 10 9" aria-hidden="true"><path d={d} fill="#8a8a8a" /></svg>
  </button>
);
const Cell = ({ w, children }: Kids & { w: string }) => (
  <span className={`h-6 shrink-0 border-l border-[#d0d0d0] pl-1 leading-[27px] ${w}`}>{children}</span>
);

export default function App() {
  return (
    <div className="flex w-full flex-col overflow-hidden border border-[#707070] bg-[#f7f7f7] font-['Noto_Sans',sans-serif] text-xs text-black">
      <header className="flex h-[37px] items-center bg-white pl-2">
        <svg className="size-5" viewBox="0 0 20 20" aria-hidden="true">
          <path d="M2 6 11 1Q18 2 20 7L18 14 14 17 7 14 2 12Z" fill="#3d6690" />
          <path d="M4 5 13 9M8 3 17 8M11 2 19 7M13 4 14 16M17 6 17 14M8 4 6 8M11 8 11 14" stroke="#a9c8e4" strokeWidth=".8" />
          <text x="2" y="18" fontSize="13" fontWeight="700" fill="#d8a81c" stroke="#8a6a10" strokeWidth=".4" fontFamily="Noto Sans, sans-serif">6</text>
        </svg>
        <h1 className="ml-1.5 flex-1 text-[14px] leading-6">Dlubal RFEM | 6.02.0023 | Fachwerk mit PS Optimierung.rf6</h1>
        {[["Minimize", "M0 5.500H12"], ["Maximize", "M.500.500H11.500V11.500H.500Z"], ["Close", "M0 0 12 12M12 0 0 12"]].map(([n, d]) => (
          <button key={n} type="button" aria-label={n} className="flex h-full w-[59px] items-center justify-center">
            <svg className="size-3" viewBox="0 0 12 12" aria-hidden="true"><path d={d} fill="none" stroke="#000" strokeWidth="1.100" /></svg>
          </button>
        ))}
      </header>

      <nav className="flex h-[25px] items-center border-b border-[#e4e4e4]" aria-label="Main menu">
        <svg className="h-[15px] w-5" viewBox="0 0 20 15" aria-hidden="true">
          <rect width="20" height="15" fill="#252f72" />
          <path d="M0 9.500H20M7 2V15M0 7 7 2 20 9" fill="none" stroke="#fff" strokeWidth="1.200" />
        </svg>
        {menus.map((m) => <button key={m} type="button" className="h-full pt-px pr-[9px] pl-2">{m}</button>)}
        <svg className="ml-auto h-6 w-[380px] shrink-0" viewBox="1019 38 380 24" aria-hidden="true">
          <path d="M1022.500 45.500h2M1026 45.500h2M1053 45.500h2M1104 45.500h1M1152 45.500h1M1185 45.500h1" stroke="#111" />
          <path d="M1332.500 38V46M1354.500 38V61M1376.500 38V61" stroke="#b8b8b8" />
        </svg>
      </nav>

      <div className="flex h-[35px] items-center border-b border-[#e4e4e4] pb-px" role="toolbar" aria-label="Standard">
        <Group>
          <Tool n="New model" /><Tool n="Open" /><Tool n="Dlubal Center" /><Tool n="Block manager" /><Tool n="Project navigator" /><Tool n="Save" />
          <Tool n="Print" /><Drop label="Print" /><Tool n="New report" /><Tool n="Report" /><Sep />
          <Tool n="Undo" /><Drop label="Undo" /><Tool n="Redo" /><Drop label="Redo" light /><Sep />
          <Tool n="Navigator" /><Tool n="Tables" on /><Tool n="Control panel" /><Tool n="Console" /><Tool n="Script" /><Tool n="Property list" />
        </Group>
        <Group>
          <Tool n="Select parallelogram" /><Tool n="Select ellipse" /><Tool n="Select ring" /><Tool n="Select polygon" /><Tool n="Select by number" />
        </Group>
        <Group grow>
          <Tool n="New load case" /><Tool n="Load cases" />
          <label className="flex h-6 min-w-[151px] shrink-0 items-center bg-[#e8e8f3] pl-[5px]">
            <span className="w-[38px] bg-[#c96a6a] text-center leading-4 text-white">ULS</span>
            <select aria-label="Load case" className="ml-1.5 h-6 w-[68px] appearance-none bg-transparent"><option>DS1</option></select>
            <span className="mr-2 h-[18px] w-px bg-white" />
            <span className="mr-1">...</span>
            <Chevron />
          </label>
          <Step dir="l" label="Previous load case" /><Step dir="r" label="Next load case" />
          <Tool n="Cancel filter" /><Drop label="Filter" /><Tool n="Show loads" /><Tool n="Load values" /><Tool n="Show results" on /><Tool n="Result values" />
          <Tool n="Result grid" on /><Drop label="Result grid" on /><Tool n="Result diagrams" on /><Tool n="Diagram values" on /><Sep />
          <span className="flex-1" /><More label="results" />
        </Group>
        <Group last><Tool n="Clear search" /><span className="w-1" /><More label="search" /></Group>
      </div>

      <div className="flex h-[34px] items-center pb-px" role="toolbar" aria-label="Modeling">
        <Group>
          <Tool n="New node" /><Drop label="Node" /><Tool n="New line" /><Tool n="New member" /><Drop label="Member" /><Tool n="New polyline" /><Drop label="Line" /><Sep />
          <Tool n="New nodal support" /><Tool n="New line support" /><Tool n="New surface support" /><Sep wide />
          <Tool n="New dimension" /><Drop label="Dimension" /><Tool n="New annotation" /><Sep />
          <Tool n="New surface" /><Drop label="Surface" /><Tool n="New curved surface" /><Drop label="Curved surface" /><Tool n="New opening" /><Drop label="Opening" />
          <Tool n="New solid" /><Drop label="Solid" /><Tool n="New set" /><Sep wide />
          <Tool n="Nodal load" /><Tool n="Line load" /><Tool n="Member load" /><Tool n="Surface load" /><Tool n="Imperfection" /><Drop label="Imperfection" />
          <Tool n="Free load" /><Drop label="Free load" />
        </Group>
        <Group grow>
          <Tool n="Filter window" /><Sep /><Tool n="Deformation" on /><Tool n="Animation" /><Sep wide />
          <Tool n="Internal forces" /><Tool n="Surface stress" /><Tool n="Solid stress" /><Tool n="Reactions" /><Tool n="Result section" /><Sep />
          <span className="flex-1" /><More label="views" />
        </Group>
        <Group>
          <label className="flex h-6 w-[150px] items-center bg-[#e8e8f3] pr-1.5 pl-[5px]">
            <span className="size-[14px] shrink-0 bg-[#ccffff]" />
            <select aria-label="Coordinate system" className="ml-1.5 h-6 min-w-0 flex-1 appearance-none bg-transparent"><option>1 - Global XYZ</option></select>
            <Chevron />
          </label>
          <span className="w-[3px]" /><More label="coordinate systems" />
        </Group>
        <Group last><Tool n="View table" /><Drop label="Table" /><span className="w-px" /><More label="tables" /></Group>
      </div>

      <main className="grid bg-white">
        <Structure />
        <div className="col-start-1 row-start-1 self-start pt-[5px] pl-[5px] text-[14px] leading-[22px]">
          <p>DS1 - ULS (STR/GEO) - Permanent and transient - Eq. 6.10</p>
          <p>Static Analysis</p>
          <p>Displacements |u| [mm]</p>
        </div>
        <p className="col-start-1 row-start-1 self-end pb-[3px] pl-[5px] text-[13px] leading-[22px]">max |u| : 37.4 | min |u| : 0.0 mm</p>
      </main>

      <section aria-label="Optimization" className="mt-[5px] flex flex-col">
        <div className="flex h-[25px] items-center bg-[#d8e6f3] pr-2 pl-[7px]">
          <h2 className="flex-1 pt-0.5 text-[14px] leading-5 font-bold text-[#404040]">Optimization</h2>
          <button type="button" aria-label="Float panel" className="mr-4">
            <svg className="size-[11px]" viewBox="0 0 11 11" aria-hidden="true">
              <path d="M3.500 3V1H10V7H8" fill="none" stroke="#333" strokeWidth="1.200" /><path d="M3 1.500H10.500" stroke="#333" strokeWidth="2" />
              <path d="M1 5V10H7V4H1" fill="none" stroke="#333" strokeWidth="1.200" /><path d="M.500 5H7.500" stroke="#333" strokeWidth="2" />
            </svg>
          </button>
          <button type="button" aria-label="Close panel">
            <svg className="size-[11px]" viewBox="0 0 11 11" aria-hidden="true"><path d="M1.500 1 9.500 10M9.500 1 1.500 10" stroke="#333" strokeWidth="2.200" /></svg>
          </button>
        </div>
        <nav className="flex h-6 items-center" aria-label="Panel menu">
          {panelMenus.map((m) => <button key={m} type="button" className="h-full pt-1 pr-[9px] pl-2">{m}</button>)}
        </nav>
        <div className="flex h-[35px] w-[306px] items-center border-t border-r border-[#dcdcdc] pb-px pl-0.5">
          <label className="flex h-6 w-[250px] items-center bg-[#e8e8f3] pr-[5px] pl-[5px]">
            <svg className="size-[18px] shrink-0" viewBox="0 0 18 18" aria-hidden="true">
              <rect x=".500" y=".500" width="17" height="17" fill="#b4b4b4" stroke="#777" /><rect x="1" y="1" width="16" height="2.500" fill="#4050a0" />
              <path d="M9 5V16M3 7 15 14M15 7 3 14" stroke="#222" strokeWidth="1.300" /><circle cx="9" cy="10.500" r="2" fill="#222" />
              <path d="M7 5.500H11M7 15.500H11M3 5.500V9M15 5.500V9M3 12V15.500M15 12V15.500" stroke="#222" />
            </svg>
            <select aria-label="Table category" className="ml-1.5 h-6 min-w-0 flex-1 appearance-none bg-transparent"><option>Optimization</option></select>
            <Chevron />
          </label>
          <Step dir="l" label="Previous category" /><Step dir="r" label="Next category" />
          <span className="ml-1 h-[25px] w-px bg-[#d4d4d4]" />
          <span className="ml-1 h-full w-px bg-[#dcdcdc]" />
        </div>
        <ResultTable />
        <div className="flex h-7 items-start border-t-2 border-[#c8c8d0] pr-2">
          <div className="flex h-7 items-center">
            <PageStep label="First page" d="M0 0H2V9H0ZM9 0V9L3 4.500Z" />
            <PageStep label="Previous page" d="M8 0V9L2 4.500Z" />
            <span className="w-16 text-center">1 of 1</span>
            <PageStep label="Next page" d="M2 0V9L8 4.500Z" />
            <PageStep label="Last page" d="M8 0H10V9H8ZM1 0V9L7 4.500Z" />
          </div>
          <button type="button" className="-mt-0.5 h-7 border border-t-0 border-[#c8c8d0] bg-white px-2 pt-0.5">Optimized Values</button>
        </div>
      </section>

      <footer className="flex h-[27px] items-center">
        <span className="flex-1" />
        <button type="button" aria-pressed="true" className="h-6 border-t border-l border-[#bdbdbd] bg-[#ececec] px-1 pt-1">SNAP</button>
        <button type="button" className="h-6 px-2 pt-1">GRID</button>
        <button type="button" aria-pressed="true" className="h-6 border-t border-l border-[#bdbdbd] bg-[#ececec] px-1 pt-1">LGRID</button>
        <button type="button" className="mr-2 h-6 pt-1 pl-2">OSNAP</button>
        <Cell w="w-[101px]" /><Cell w="w-[131px]" /><Cell w="w-[194px]">CS: Global XYZ</Cell><Cell w="w-[81px]">Plane: XY</Cell>
        <Cell w="w-[94px]" /><Cell w="w-[94px]" /><Cell w="w-[94px]" />
        <span className="flex h-6 w-5 items-end justify-end border-l border-[#d0d0d0]">
          <svg className="size-[11px]" viewBox="0 0 11 11" aria-hidden="true">
            <path d="M8 0H10V2H8ZM8 4H10V6H8ZM8 8H10V10H8ZM4 4H6V6H4ZM4 8H6V10H4ZM0 8H2V10H0Z" fill="#b8b8b8" />
          </svg>
        </span>
      </footer>
    </div>
  );
}
